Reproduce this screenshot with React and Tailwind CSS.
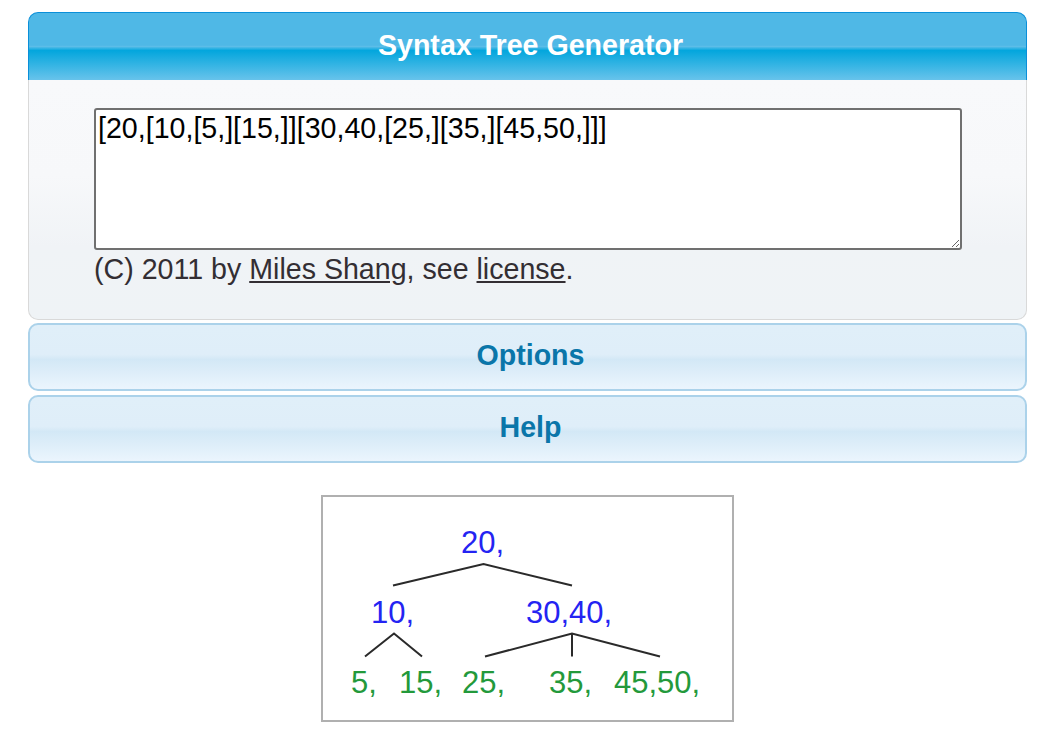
import React from "react";

const font = { fontFamily: '"Liberation Sans", Arial, sans-serif' };

function Tree() {
  const blue = "#2424f2";
  const green = "#23993b";
  const line = "#2a2a2a";
  return (
    <svg width="409" height="223" viewBox="323 497 409 223" className="block">
      <g stroke={line} strokeWidth="2" fill="none">
        <polyline points="393,585.5 483.5,564 572,585.5" />
        <polyline points="365,656.5 394,633.5 422,656.5" />
        <polyline points="485,656.5 572,633.5 660,656.5" />
        <line x1="572" y1="633.5" x2="572" y2="656.5" />
      </g>
      <g fontFamily='"Liberation Sans", Arial, sans-serif' fontSize="31">
        <text x="461" y="553" fill={blue}>20,</text>
        <text x="371" y="623" fill={blue}>10,</text>
        <text x="526" y="623" fill={blue}>30,40,</text>
        <text x="351" y="693" fill={green}>5,</text>
        <text x="399" y="693" fill={green}>15,</text>
        <text x="462" y="693" fill={green}>25,</text>
        <text x="549" y="693" fill={green}>35,</text>
        <text x="614" y="693" fill={green}>45,50,</text>
      </g>
    </svg>
  );
}

export default function App() {
  return (
    <div className="w-[1055px] min-h-[743px] bg-white pt-[12px]" style={font}>
      <div className="mx-[28px]">
        <div className="h-[68px] rounded-t-[10px] border border-b-0 border-[#0a8fd9] bg-[linear-gradient(to_bottom,#4fb8e6_0%,#4fb8e6_48%,#5cbde8_50%,#03a6dd_56%,#68c3eb_100%)] flex items-center justify-center pb-[2px] pl-[6px]">
          <span className="text-[28.6px] font-bold text-white leading-none">Syntax Tree Generator</span>
        </div>
        <div className="h-[240px] rounded-b-[10px] border border-t-0 border-[#d9d9d9] bg-[linear-gradient(to_bottom,#f8f9fb_0%,#f7f8fa_40%,#f0f3f6_70%,#eff3f6_100%)] px-[65px] pt-[28px]">
          <textarea
            className="block w-[868px] h-[142px] border-2 border-[#707070] rounded-[3px] bg-white p-[2px] text-[28.6px] text-black leading-[33px] resize"
            style={font}
            defaultValue="[20,[10,[5,][15,]][30,40,[25,][35,][45,50,]]]"
          />
          <p className="mt-[3px] text-[28.6px] leading-[33px] text-[#332e33]">
            (C) 2011 by <a className="underline" href="#">Miles Shang</a>, see <a className="underline" href="#">license</a>.
          </p>
        </div>
        <div className="mt-[3px] h-[68px] rounded-[10px] border-2 border-[#abd2ea] bg-[linear-gradient(to_bottom,#e0eff9_0%,#dfeef9_46%,#d3e8f6_54%,#ebf5fd_100%)] flex items-center justify-center pb-[4px] pl-[6px]">
          <span className="text-[28.6px] font-bold text-[#0a76a9] leading-none">Options</span>
        </div>
        <div className="mt-[4px] h-[68px] rounded-[10px] border-2 border-[#abd2ea] bg-[linear-gradient(to_bottom,#e0eff9_0%,#dfeef9_46%,#d3e8f6_54%,#ebf5fd_100%)] flex items-center justify-center pb-[4px] pl-[6px]">
          <span className="text-[28.6px] font-bold text-[#0a76a9] leading-none">Help</span>
        </div>
      </div>
      <div className="flex justify-center mt-[32px]">
        <div className="border-2 border-[#b0b0b0] bg-white">
          <Tree />
        </div>
      </div>
    </div>
  );
}
